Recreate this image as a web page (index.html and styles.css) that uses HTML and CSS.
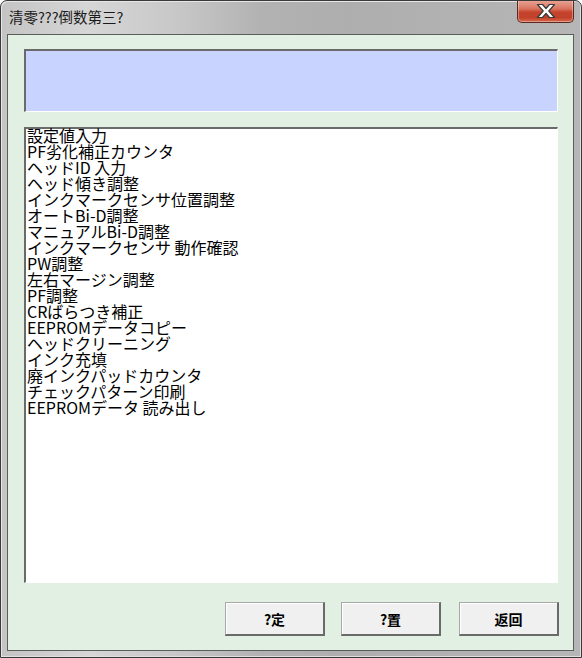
FILE: index.html
```html
<!DOCTYPE html>
<html>
<head>
<meta charset="utf-8">
<link rel="stylesheet" href="styles.css">
</head>
<body>
<div class="window">
  <div class="titlebar">
    <div class="title">清零???倒数第三?</div>
    <div class="close">
      <svg width="22" height="16" viewBox="0 0 22 16">
        <path d="M2.5 1.5 H7.5 L11 5.5 L14.5 1.5 H19.5 L13.8 8 L19.5 14.5 H14.5 L11 10.5 L7.5 14.5 H2.5 L8.2 8 Z" fill="#fff" stroke="#3a3a3a" stroke-width="1.2" stroke-linejoin="round"/>
      </svg>
    </div>
  </div>
  <div class="client">
    <div class="display"></div>
    <div class="list">
      <div class="items">
        <div class="item">設定値入力</div>
        <div class="item">PF劣化補正カウンタ</div>
        <div class="item">ヘッドID 入力</div>
        <div class="item">ヘッド傾き調整</div>
        <div class="item">インクマークセンサ位置調整</div>
        <div class="item">オートBi-D調整</div>
        <div class="item">マニュアルBi-D調整</div>
        <div class="item">インクマークセンサ 動作確認</div>
        <div class="item">PW調整</div>
        <div class="item">左右マージン調整</div>
        <div class="item">PF調整</div>
        <div class="item">CRばらつき補正</div>
        <div class="item">EEPROMデータコピー</div>
        <div class="item">ヘッドクリーニング</div>
        <div class="item">インク充填</div>
        <div class="item">廃インクパッドカウンタ</div>
        <div class="item">チェックパターン印刷</div>
        <div class="item">EEPROMデータ 読み出し</div>
      </div>
    </div>
    <div class="buttons">
      <div class="btn">?定</div>
      <div class="btn">?置</div>
      <div class="btn">返回</div>
    </div>
  </div>
</div>
</body>
</html>
```
FILE: styles.css
```css
html, body {
  margin: 0;
  padding: 0;
  background: #ffffff;
}
.window {
  width: 582px;
  height: 658px;
  box-sizing: border-box;
  border: 1px solid #3a3a3a;
  border-radius: 7px 7px 0 0;
  background: linear-gradient(to right, #c4c4c4 0%, #d6d6d6 15%, #c8c8c8 30%, #b2b2b2 45%, #aeaeae 60%, #b6b6b6 100%);
  box-shadow: inset 1px 1px 0 #e6e6e6, inset -1px -1px 0 #e0e0e0;
  display: flex;
  flex-direction: column;
  overflow: hidden;
}
.titlebar {
  height: 33px;
  display: flex;
  align-items: flex-start;
  justify-content: space-between;
  flex: none;
}
.title {
  font-family: "Noto Sans CJK SC", "Noto Sans", sans-serif;
  font-size: 14.5px;
  line-height: 20px;
  color: #1a1a1a;
  margin: 6px 0 0 8px;
}
.close {
  width: 57px;
  height: 23px;
  margin: -1px 7px 0 0;
  box-sizing: border-box;
  border: 1px solid #5a2a22;
  border-top: none;
  border-radius: 0 0 5px 5px;
  background: linear-gradient(to bottom, #e9a797 0%, #d9735f 40%, #c5432c 55%, #c2412a 80%, #d86a4c 100%);
  box-shadow: inset 0 0 0 1px rgba(255,255,255,0.35);
  display: flex;
  align-items: center;
  justify-content: center;
}
.client {
  flex: 1;
  margin: 0 7px 6px 6px;
  border: 1px solid #5c5c5c;
  background: #e1f0e3;
  display: flex;
  flex-direction: column;
  padding: 14px 14px 13px 16px;
}
.display {
  height: 63px;
  box-sizing: border-box;
  border-top: 2px solid #6a6a6a;
  border-left: 2px solid #6a6a6a;
  border-right: 1px solid #ffffff;
  border-bottom: 1px solid #ffffff;
  background: #c8d4ff;
  margin-right: 1px;
}
.list {
  margin-top: 15px;
  height: 456px;
  box-sizing: border-box;
  border-top: 2px solid #6a6a6a;
  border-left: 2px solid #6a6a6a;
  border-right: 1px solid #ffffff;
  border-bottom: 1px solid #ffffff;
  background: #ffffff;
  margin-right: 1px;
  padding: 0 0 0 1px;
  font-family: "Noto Sans CJK JP", "Noto Sans", sans-serif;
  font-size: 16px;
  line-height: 16px;
  color: #000;
}
.items {
  margin-top: -2px;
}
.item {
  height: 16px;
  white-space: nowrap;
}
.buttons {
  margin-top: 19px;
  display: flex;
  justify-content: flex-end;
  gap: 16px;
}
.btn {
  width: 100px;
  height: 34px;
  box-sizing: border-box;
  border-top: 1px solid #a8a8a8;
  border-left: 1px solid #a8a8a8;
  border-right: 2px solid #6a6a6a;
  border-bottom: 2px solid #6a6a6a;
  box-shadow: inset 1px 1px 0 #ffffff;
  background: #f0f0f0;
  font-family: "Noto Sans CJK SC", "Noto Sans", sans-serif;
  font-size: 14px;
  font-weight: bold;
  display: flex;
  align-items: center;
  justify-content: center;
  color: #000;
}
.btn:last-child {
  margin-left: 2px;
}
```
